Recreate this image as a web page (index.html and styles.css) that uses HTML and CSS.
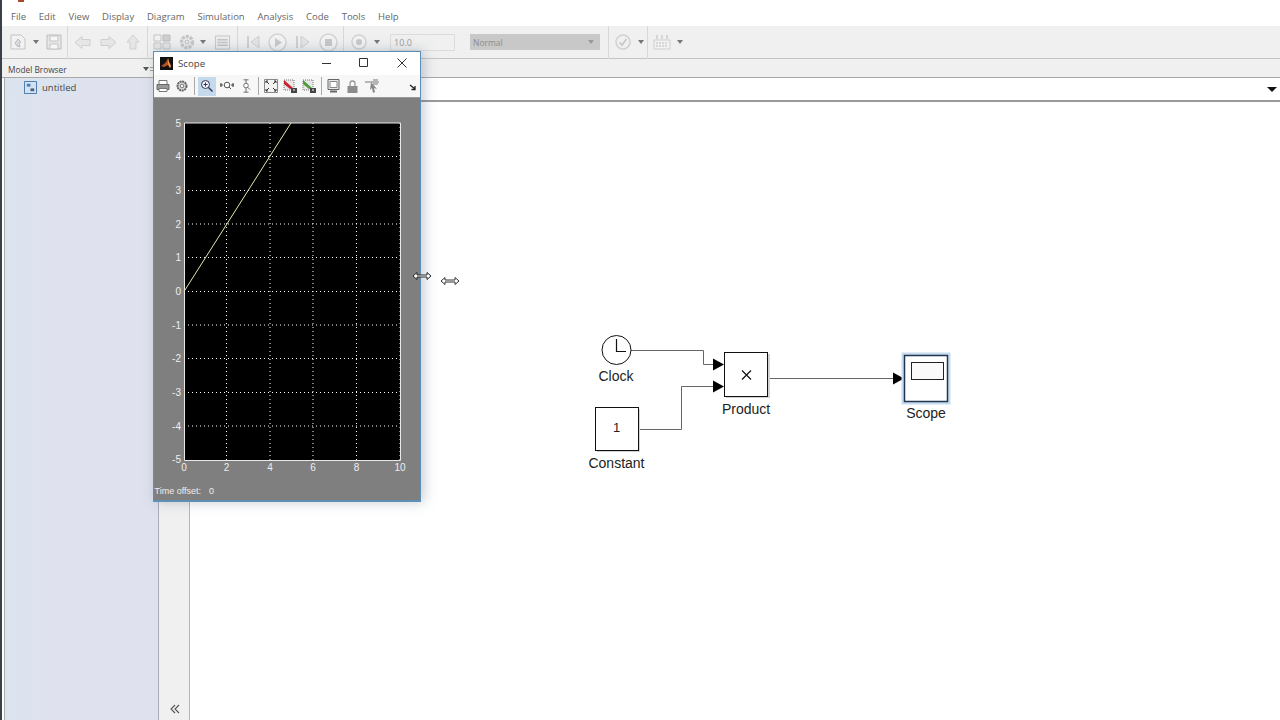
FILE: index.html
```html
<!DOCTYPE html>
<html lang="en">

<head>
    <meta charset="UTF-8">
    <title>untitled - Simulink</title>
    <link rel="stylesheet" href="styles.css">
</head>

<body>
    <div class="app">
        <i class="applogo"></i>

        <!-- menu -->
        <nav class="menubar">
            <span>File</span><span>Edit</span><span>View</span><span>Display</span><span>Diagram</span>
            <span>Simulation</span><span>Analysis</span><span>Code</span><span>Tools</span><span>Help</span>
        </nav>

        <!-- main toolbar, everything greyed out while the scope is up -->
        <div class="toolbar">
            <svg class="tool w16" viewBox="0 0 16 16"><path d="M1 1h10l4 4v10H1z" fill="#f2f2f2" stroke="#c4c4c4"/><path d="M5 9l3-4 3 3-2 1 1 4-3-1z" fill="#d8dde2" stroke="#bbb"/></svg>
            <i class="drop gap7"></i>
            <svg class="tool w16 gap7" viewBox="0 0 16 16"><path d="M1 1h14v14H1z" fill="#e6e6e6" stroke="#bdbdbd"/><path d="M4 2h8v5H4zM4 10h8v5H4z" fill="#f6f6f6" stroke="#c4c4c4"/></svg>
            <b class="sep sep1"></b>
            <svg class="tool w17 gap6" viewBox="0 0 17 14"><path d="M1 7l7-6v3h8v6H8v3z" fill="#e6e6e6" stroke="#cfcfcf"/></svg>
            <svg class="tool w17 gap9" viewBox="0 0 17 14"><path d="M16 7L9 1v3H1v6h8v3z" fill="#e6e6e6" stroke="#cfcfcf"/></svg>
            <svg class="tool w14 gap9" viewBox="0 0 14 16"><path d="M7 1l6 7h-3v7H4V8H1z" fill="#e6e6e6" stroke="#cfcfcf"/></svg>
            <b class="sep sep2"></b>
            <svg class="tool w18 gap5" viewBox="0 0 18 16"><path d="M1 1h7v6H1z" fill="#f2f2f2" stroke="#c4c4c4"/><path d="M10 1h7v6h-7z" fill="#cfcfcf" stroke="#bdbdbd"/><path d="M1 9h7v6H1zM10 9h7v6h-7z" fill="#e6e6e6" stroke="#c4c4c4"/></svg>
            <svg class="tool w16 gap8" viewBox="0 0 16 16"><circle cx="8" cy="8" r="5.5" fill="none" stroke="#c6c6c6" stroke-width="3.4" stroke-dasharray="3 1"/><circle cx="8" cy="8" r="2" fill="#e8e8e8" stroke="#bbb"/></svg>
            <i class="drop gap5"></i>
            <svg class="tool w17 gap8" viewBox="0 0 17 16"><path d="M1 1h15v14H1z" fill="#eee" stroke="#c4c4c4"/><path d="M3 5h11M3 8h11M3 11h11" stroke="#c4c4c4" stroke-width="1.5"/></svg>
            <b class="sep sep3"></b>
            <svg class="tool w16 gap7" viewBox="0 0 16 16"><path d="M14 2L6 8l8 6z" fill="#e4e4e4" stroke="#cfcfcf"/><path d="M3 2v12" stroke="#cfcfcf" stroke-width="2"/></svg>
            <svg class="tool w19 gap7" viewBox="0 0 19 19"><circle cx="9.500" cy="9.500" r="8.500" fill="#f3f3f3" stroke="#d2d2d2" stroke-width="1.500"/><path d="M7 5l7 4.500L7 14z" fill="#c8c8c8"/></svg>
            <svg class="tool w16 gap8" viewBox="0 0 16 16"><path d="M6 2l8 6-8 6z" fill="#e4e4e4" stroke="#cfcfcf"/><path d="M2 2v12" stroke="#cfcfcf" stroke-width="2"/></svg>
            <svg class="tool w19 gap8" viewBox="0 0 19 19"><circle cx="9.500" cy="9.500" r="8.500" fill="#f3f3f3" stroke="#d2d2d2" stroke-width="1.500"/><path d="M6 6h7v7H6z" fill="#c8c8c8"/></svg>
            <b class="sep sep4"></b>
            <svg class="tool w16 gap7" viewBox="0 0 16 16"><circle cx="8" cy="8" r="7" fill="#f3f3f3" stroke="#d2d2d2" stroke-width="1.500"/><circle cx="8" cy="8" r="3" fill="#c8c8c8"/></svg>
            <i class="drop gap7"></i>
            <span class="stoptime">10.0</span>
            <span class="simmode">Normal<i class="drop"></i></span>
            <b class="sep sep5"></b>
            <svg class="tool w16 gap6" viewBox="0 0 16 16"><circle cx="8" cy="8" r="7" fill="#f0f0f0" stroke="#d0d0d0" stroke-width="1.500"/><path d="M4.500 8.500l2.500 2.500 4.500-6" fill="none" stroke="#c4c4c4" stroke-width="1.500"/></svg>
            <i class="drop gap7"></i>
            <b class="sep sep6"></b>
            <svg class="tool w18 gap5" viewBox="0 0 18 16"><path d="M1 6h16v9H1z" fill="#f2f2f2" stroke="#cfcfcf"/><path d="M4 1v4M9 1v4M14 1v4" stroke="#bbb"/><path d="M3 9h12M3 12h12" stroke="#bbb" stroke-dasharray="2 1"/></svg>
            <i class="drop gap6"></i>
        </div>

        <div class="browserbar">
            <span>Model Browser</span>
            <i class="drop"></i>
            <i class="grip"></i>
        </div>

        <div class="workspace">
            <aside class="browser">
                <div class="treerow">
                    <svg class="treeicon" viewBox="0 0 14 14"><path d="M.5.5h13v13H.5z" fill="#d4e2f2" stroke="#3f74a8"/><path d="M3 3h4v3H3z" fill="#4a7fb5"/><path d="M7 8h4v3H7z" fill="#4a5f78"/></svg>
                    <span>untitled</span>
                </div>
            </aside>

            <div class="strip">
                <svg class="collapse" viewBox="0 0 10 10"><path d="M5 1L1 5l4 4M9 1L5 5l4 4" fill="none" stroke="#555" stroke-width="1.100"/></svg>
            </div>

            <main class="editor">
                <div class="address"><i class="drop dark"></i></div>
                <div class="canvas">
                    <!-- viewBox is in page pixels, easier to read off the blocks -->
                    <svg class="diagram" viewBox="190 102 1090 618">
                        <path class="wire" d="M631 350.500H703.500V364.500H714"/>
                        <path class="wire" d="M638 429.500H681.500V386.500H714"/>
                        <path class="wire" d="M768 378.500H894"/>
                        <path class="head" d="M713 358.500L724 364.500L713 370.500z"/>
                        <path class="head" d="M713 380.500L724 386.500L713 392.500z"/>
                        <path class="head" d="M893 372.500L904 378.500L893 384.500z"/>

                        <circle class="block" cx="616.500" cy="350" r="14.500"/>
                        <path class="glyph" d="M616.500 339V351.500H626"/>
                        <text class="label" x="616" y="381">Clock</text>

                        <rect class="shadow" x="726" y="354" width="44" height="44"/>
                        <rect class="block" x="724.500" y="352.500" width="43" height="44"/>
                        <path class="glyph" d="M742 370.500l9 9M751 370.500l-9 9"/>
                        <text class="label" x="746" y="414">Product</text>

                        <rect class="shadow" x="597" y="409" width="43" height="43"/>
                        <rect class="block" x="595.500" y="407.500" width="43" height="43"/>
                        <text class="value" x="616.500" y="432">1</text>
                        <text class="label" x="616.500" y="468">Constant</text>

                        <rect class="selected" x="901.500" y="352.500" width="49" height="52"/>
                        <rect class="block scopeblock" x="904.500" y="355.500" width="43" height="46"/>
                        <rect class="screen" x="911.500" y="362.500" width="32" height="17"/>
                        <text class="label" x="926" y="418">Scope</text>
                    </svg>
                </div>
            </main>
        </div>

        <!-- floating scope window -->
        <section class="scope">
            <header class="scopetitle">
                <svg class="matlabicon" viewBox="0 0 13 13"><path d="M0 0h13v13H0z" fill="#111"/><path d="M1 9l3-2 2-2 2-4 1 4 2 4-1 2-2-3-2 1-2 1z" fill="#b8502a"/><path d="M8 1l1 4 2 4-1 2-2-4z" fill="#e89a3c"/></svg>
                <span class="scopename">Scope</span>
                <svg class="winbtn minbtn" viewBox="0 0 10 10"><path d="M0 5.500h9" stroke="#333"/></svg>
                <svg class="winbtn maxbtn" viewBox="0 0 10 10"><path d="M.5.500h8v8h-8z" fill="none" stroke="#333"/></svg>
                <svg class="winbtn closebtn" viewBox="0 0 10 10"><path d="M.5.500l9 9M9.500.500l-9 9" stroke="#333"/></svg>
            </header>
            <div class="scopetools">
                <svg class="stool s14" viewBox="0 0 14 13"><path d="M3 1h8v4H3z" fill="#fff" stroke="#777"/><path d="M1 5h12v5H1z" fill="#999" stroke="#666"/><path d="M3 9h8v3H3z" fill="#fff" stroke="#777"/></svg>
                <svg class="stool s12 m6" viewBox="0 0 12 12"><circle cx="6" cy="6" r="4.500" fill="#ddd" stroke="#666" stroke-width="2" stroke-dasharray="2 .6"/><circle cx="6" cy="6" r="1.800" fill="#fff" stroke="#777"/></svg>
                <b class="ssep s1"></b>
                <span class="zoomon"><svg class="stool s14" viewBox="0 0 14 14"><circle cx="5.500" cy="5.500" r="4" fill="#eef4fa" stroke="#335"/><path d="M3.500 5.500h4M5.500 3.500v4" stroke="#335"/><path d="M8.500 8.500l4 4" stroke="#335" stroke-width="1.500"/></svg></span>
                <svg class="stool s14 m4" viewBox="0 0 14 12"><circle cx="7" cy="5" r="2.800" fill="#fff" stroke="#555"/><path d="M9 7l2 2M0 5h3M11 5h3" stroke="#555"/><path d="M1 3v4M13 3v4" stroke="#333"/></svg>
                <svg class="stool s14 m5" viewBox="0 0 14 17"><circle cx="7" cy="8" r="2.800" fill="#fff" stroke="#555"/><path d="M7 1v4M7 11v5M9 10l3 3M4 16h6M4 1h6" stroke="#555"/></svg>
                <b class="ssep s2"></b>
                <svg class="stool s14" viewBox="0 0 14 14"><path d="M.5.500h13v13H.5z" fill="#f2f2f2" stroke="#888"/><path d="M2 2l3 3M2 2h2M2 2v2M12 2L9 5M12 2h-2M12 2v2M2 12l3-3M2 12h2M2 12v-2M12 12L9 9M12 12h-2M12 12v-2" stroke="#333"/></svg>
                <svg class="stool s14 m5" viewBox="0 0 14 14"><path d="M1 1h10v10H1z" fill="#e8e8e8" stroke="#777" stroke-dasharray="1 1"/><path d="M1 1l9 8-3 1-6-5z" fill="#c8202e"/><path d="M8 9h6v5H8z" fill="#444"/><path d="M10 11h2" stroke="#fff"/></svg>
                <svg class="stool s14 m5" viewBox="0 0 14 14"><path d="M1 1h10v10H1z" fill="#e8e8e8" stroke="#777" stroke-dasharray="1 1"/><path d="M1 1l9 8-3 1-6-5z" fill="#4c9c3a"/><path d="M8 9h6v5H8z" fill="#444"/><path d="M10 11h2" stroke="#fff"/></svg>
                <b class="ssep s3"></b>
                <svg class="stool s13" viewBox="0 0 13 14"><path d="M1 .5h11v10H1z" fill="#e8e8ee" stroke="#666"/><path d="M3 2.500h7v6H3z" fill="#fff" stroke="#888"/><path d="M3 12.500h7" stroke="#666" stroke-width="2"/></svg>
                <svg class="stool s11 m7" viewBox="0 0 11 13"><path d="M3 6V3.500a2.500 2.500 0 0 1 5 0V6" fill="none" stroke="#999" stroke-width="1.300"/><path d="M.5 6h10v7H.5z" fill="#8c8c8c"/></svg>
                <svg class="stool s15 m7" viewBox="0 0 15 14"><path d="M0 3h14M8 1h5M8 5h5" stroke="#777" stroke-width="1.200"/><path d="M6 3l6 7-3-1 1 4-2 1-1-5-2 2z" fill="#888"/></svg>
                <svg class="stool pin" viewBox="0 0 8 7"><path d="M1 1l5 4M6 2v3.500H2.500" fill="none" stroke="#222" stroke-width="1.300"/></svg>
            </div>
            <div class="scopeplot">
                <svg class="plot" viewBox="154 98 266 402">
                    <rect x="184" y="123" width="216" height="337" fill="#000"/>
                    <path class="grid" d="M226.500 123V460M270 123V460M313 123V460M356.500 123V460M400 123V460"/>
                    <path class="grid" d="M184 156.500H400M184 190.500H400M184 224H400M184 257.500H400M184 291.500H400M184 325H400M184 358.500H400M184 392.500H400M184 426H400"/>
                    <path class="axisline" d="M184.500 123V460.500H400.500V123H184.500"/>
                    <path class="trace" d="M184 291.500L291 123"/>
                    <g class="ylabels">
                        <text x="181" y="127">5</text>
                        <text x="181" y="160">4</text>
                        <text x="181" y="194">3</text>
                        <text x="181" y="228">2</text>
                        <text x="181" y="261">1</text>
                        <text x="181" y="295">0</text>
                        <text x="181" y="329">-1</text>
                        <text x="181" y="362">-2</text>
                        <text x="181" y="396">-3</text>
                        <text x="181" y="430">-4</text>
                        <text x="181" y="463">-5</text>
                    </g>
                    <g class="xlabels">
                        <text x="184" y="471">0</text>
                        <text x="226.500" y="471">2</text>
                        <text x="270" y="471">4</text>
                        <text x="313" y="471">6</text>
                        <text x="356.500" y="471">8</text>
                        <text x="400" y="471">10</text>
                    </g>
                    <text class="offset" x="154.500" y="494">Time offset:</text>
                    <text class="offset" x="209" y="494">0</text>
                </svg>
            </div>
        </section>

        <!-- resize cursor, caught twice by the recording -->
        <svg class="cursor cursor1" viewBox="0 0 20 10"><path d="M1 5l4-3.500V4h10V1.500L19 5l-4 3.500V6H5v2.500z" fill="#fff" stroke="#222"/></svg>
        <svg class="cursor cursor2" viewBox="0 0 20 10"><path d="M1 5l4-3.500V4h10V1.500L19 5l-4 3.500V6H5v2.500z" fill="#fff" stroke="#333"/></svg>
    </div>
</body>

</html>
```

FILE: styles.css
```css
* {
    margin: 0;
    padding: 0;
    box-sizing: border-box;
}

body {
    overflow: hidden;
    background: #fff;
    font-family: "Open Sans", "Noto Sans", sans-serif;
}

i {
    font-style: normal;
}

.app {
    position: relative;
    display: flex;
    width: 1280px;
    height: 720px;
    flex-direction: column;
    border-left: 2px solid #3a4048;
    overflow: hidden;
}

.applogo {
    position: absolute;
    left: 16px;
    top: 0;
    width: 6px;
    height: 2px;
    background: #a8492c;
}

.menubar {
    display: flex;
    height: 26px;
    padding: 6px 0 0 9px;
    gap: 12.800px;
    align-items: center;
    background: #fff;
    color: #666;
    font-size: 9.500px;
}

.toolbar {
    display: flex;
    height: 33px;
    padding-left: 8px;
    align-items: center;
    background: #f0f0f0;
    border-bottom: 1px solid #c4c4c4;
}

.tool {
    flex: none;
    display: block;
}

.w14 { width: 14px; height: 16px; }
.w16 { width: 16px; height: 16px; }
.w17 { width: 17px; height: 15px; }
.w18 { width: 18px; height: 16px; }
.w19 { width: 19px; height: 19px; }

.gap5 { margin-left: 5px; }
.gap6 { margin-left: 6px; }
.gap7 { margin-left: 7px; }
.gap8 { margin-left: 8px; }
.gap9 { margin-left: 9px; }

.drop {
    flex: none;
    display: block;
    width: 0;
    height: 0;
    border-left: 3px solid transparent;
    border-right: 3px solid transparent;
    border-top: 4px solid #777;
}

.sep {
    flex: none;
    display: block;
    width: 1px;
    height: 33px;
    background: #d8d8d8;
}

.sep1 { margin-left: 5px; }
.sep2 { margin-left: 7px; }
.sep3 { margin-left: 6px; }
.sep4 { margin-left: 5px; }
.sep5 { margin-left: 8px; }
.sep6 { margin-left: 3px; }

.stoptime {
    flex: none;
    width: 65px;
    height: 17px;
    margin-left: 10px;
    padding-left: 3px;
    background: #f0f0f0;
    border: 1px solid #dcdcdc;
    color: #999;
    font-size: 9px;
    line-height: 15px;
}

.simmode {
    flex: none;
    display: flex;
    width: 130px;
    height: 16px;
    margin-left: 15px;
    padding: 0 6px 0 3px;
    align-items: center;
    justify-content: space-between;
    background: #c8c8c8;
    color: #8c8c8c;
    font-size: 8.500px;
}

.simmode .drop {
    border-top-color: #999;
}

.browserbar {
    display: flex;
    height: 19px;
    padding: 2px 0 0 6px;
    align-items: center;
    background: #f0f0f0;
    border-bottom: 1px solid #a8a8a8;
    color: #444;
    font-size: 8.300px;
}

.browserbar .drop {
    margin-left: 76px;
    border-top-color: #555;
}

.grip {
    display: block;
    width: 7px;
    height: 4px;
    margin-left: 1px;
    border-top: 1px solid #999;
    border-bottom: 1px solid #999;
}

.workspace {
    flex: 1;
    display: flex;
    min-height: 0;
}

.browser {
    flex: none;
    width: 155px;
    margin-left: 2px;
    background: linear-gradient(90deg, #dbe4ee, #dfe2ee 30%);
    border-left: 1px solid #a8aab0;
    border-right: 1px solid #a9abb5;
}

.treerow {
    display: flex;
    height: 18px;
    padding-left: 19px;
    align-items: center;
    background: linear-gradient(90deg, #dbe4ee 72px, transparent 72px);
    color: #444;
    font-size: 9.500px;
}

.treerow span {
    margin-left: 5px;
}

.treeicon {
    width: 13px;
    height: 13px;
}

.strip {
    position: relative;
    flex: none;
    width: 31px;
    background: #f0f0f0;
    border-right: 1px solid #b4b4b4;
}

.collapse {
    position: absolute;
    left: 11px;
    bottom: 6px;
    width: 10px;
    height: 10px;
}

.editor {
    flex: 1;
    display: flex;
    min-width: 0;
    flex-direction: column;
}

.address {
    display: flex;
    height: 24px;
    padding-right: 3px;
    align-items: center;
    justify-content: flex-end;
    background: #fff;
    border-bottom: 2px solid #999;
}

.address .dark {
    border-left-width: 5px;
    border-right-width: 5px;
    border-top: 5px solid #111;
}

.canvas {
    flex: 1;
    position: relative;
    background: #fff;
}

.diagram {
    position: absolute;
    left: 0;
    top: 0;
    width: 1090px;
    height: 618px;
}

.wire {
    fill: none;
    stroke: #666;
    stroke-width: 1;
}

.head {
    fill: #000;
}

.block {
    fill: #fff;
    stroke: #111;
    stroke-width: 1;
}

.scopeblock {
    stroke: #1f3550;
    stroke-width: 1.500;
}

.shadow {
    fill: #d4d4d4;
}

.selected {
    fill: #c8dcef;
}

.screen {
    fill: #fafafa;
    stroke: #222;
    stroke-width: 1;
}

.glyph {
    fill: none;
    stroke: #111;
    stroke-width: 1.200;
}

.label,
.value {
    fill: #222;
    font-family: "Liberation Sans", Arial, sans-serif;
    font-size: 14px;
    text-anchor: middle;
}

.value {
    font-size: 13px;
}

/* scope window */
.scope {
    position: absolute;
    left: 151px;
    top: 51px;
    display: flex;
    width: 268px;
    height: 451px;
    flex-direction: column;
    border: 1px solid #5f8fb4;
    border-bottom-width: 2px;
    box-shadow: 3px 0 12px rgba(90, 110, 130, .35);
}

.scopetitle {
    position: relative;
    display: flex;
    height: 23px;
    padding-left: 6px;
    flex: none;
    align-items: center;
    background: #fff;
    color: #444;
    font-size: 9.700px;
}

.matlabicon {
    width: 13px;
    height: 13px;
}

.scopename {
    margin-left: 5px;
}

.winbtn {
    position: absolute;
    top: 6px;
    width: 10px;
    height: 10px;
}

.minbtn { left: 168px; }
.maxbtn { left: 205px; }
.closebtn { left: 243px; }

.scopetools {
    position: relative;
    display: flex;
    height: 23px;
    flex: none;
    padding-left: 2px;
    align-items: center;
    background: #f7f7f7;
    border-bottom: 1px solid #999;
}

.stool {
    flex: none;
    display: block;
}

.s11 { width: 11px; height: 13px; }
.s12 { width: 12px; height: 12px; }
.s13 { width: 13px; height: 14px; }
.s14 { width: 14px; height: 14px; }
.s15 { width: 15px; height: 14px; }

.m4 { margin-left: 4px; }
.m5 { margin-left: 5px; }
.m6 { margin-left: 6px; }
.m7 { margin-left: 7px; }

.ssep {
    flex: none;
    display: block;
    width: 1px;
    height: 18px;
    background: #aaa;
}

.ssep.s1 { margin: 0 3px 0 6px; }
.ssep.s2 { margin: 0 5px 0 5px; }
.ssep.s3 { margin: 0 5px 0 5px; }

.zoomon {
    display: flex;
    width: 18px;
    height: 19px;
    align-items: center;
    justify-content: center;
    background: #c4d9ec;
}

.pin {
    position: absolute;
    right: 3px;
    top: 9px;
    width: 8px;
    height: 7px;
}

.scopeplot {
    flex: 1;
    min-height: 0;
    background: #807f7f;
}

.plot {
    display: block;
    width: 266px;
    height: 402px;
}

.grid {
    fill: none;
    stroke: #fff;
    stroke-width: 1;
    stroke-dasharray: 1 3;
}

.axisline {
    fill: none;
    stroke: #e8e8e8;
    stroke-width: 1;
}

.trace {
    fill: none;
    stroke: #e6e6b0;
    stroke-width: 1;
}

.plot text {
    fill: #eee;
    font-family: "Liberation Sans", Arial, sans-serif;
    font-size: 10px;
}

.ylabels text {
    text-anchor: end;
}

.xlabels text {
    text-anchor: middle;
}

.plot .offset {
    font-size: 9px;
}

.cursor {
    position: absolute;
    width: 20px;
    height: 10px;
}

.cursor1 {
    left: 410px;
    top: 271px;
}

.cursor2 {
    left: 438px;
    top: 276px;
}
```
